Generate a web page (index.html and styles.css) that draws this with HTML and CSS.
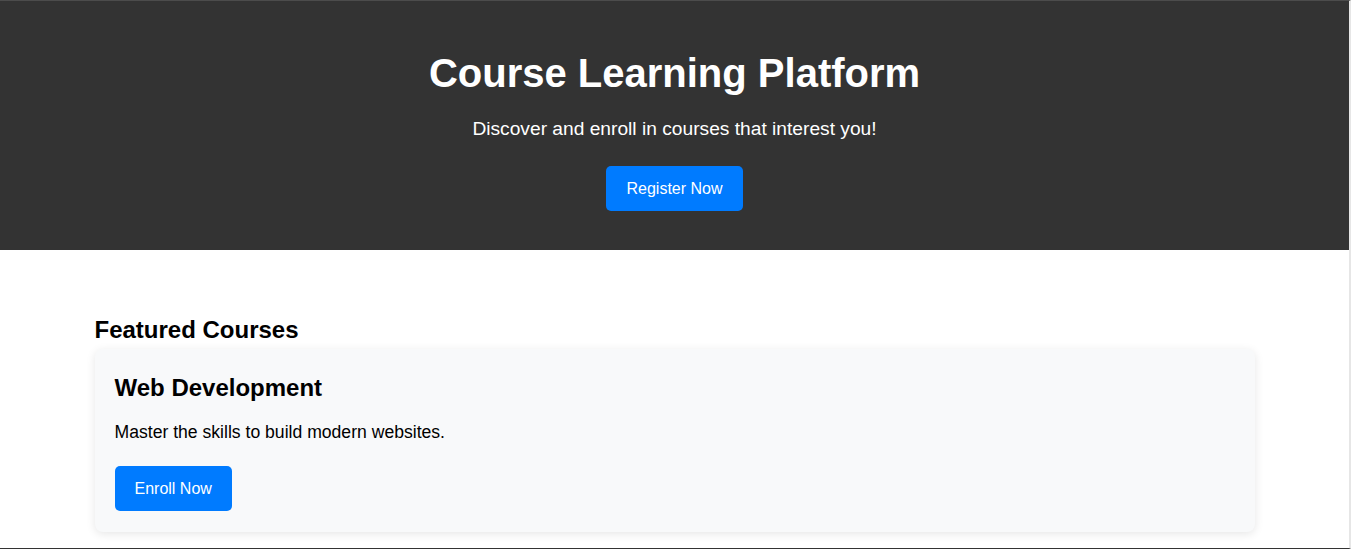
FILE: index.html
```html
<!DOCTYPE html>
<html lang="en">
<head>
<meta charset="utf-8">
<title>Course Learning Platform</title>
<link rel="stylesheet" href="styles.css">
</head>
<body>
<header class="hero">
  <h1 class="hero-title">Course Learning Platform</h1>
  <p class="hero-sub">Discover and enroll in courses that interest you!</p>
  <div class="hero-actions"><a class="btn" href="#">Register Now</a></div>
</header>
<main class="container">
  <section class="featured">
    <h2 class="section-title">Featured Courses</h2>
    <div class="card">
      <h3 class="card-title">Web Development</h3>
      <p class="card-text">Master the skills to build modern websites.</p>
      <div class="card-actions"><a class="btn" href="#">Enroll Now</a></div>
    </div>
  </section>
</main>
</body>
</html>
```

FILE: styles.css
```css
* { box-sizing: border-box; }
html, body { margin: 0; padding: 0; }
body {
  font-family: "Liberation Sans", Arial, sans-serif;
  line-height: 1.6;
  color: #000;
  background: #fff;
  margin-right: 2px;
}
body::after {
  content: "";
  position: fixed;
  left: 0; top: 0; right: 0; bottom: 0;
  border-top: 1px solid #4c4c4c;
  border-right: 2px solid #e6e6e6;
  border-bottom: 1px solid #333;
  pointer-events: none;
}
.hero {
  background: #333;
  color: #fff;
  text-align: center;
  padding: 41px 20px 39px;
}
.hero-title {
  margin: 0 0 9px;
  font-size: 40px;
  font-weight: bold;
}
.hero-sub {
  margin: 0 0 21px;
  font-size: 19.2px;
}
.hero-actions, .card-actions { display: flex; }
.hero-actions { justify-content: center; }
.btn {
  display: inline-block;
  background: #007bff;
  color: #fff;
  text-decoration: none;
  font-size: 16px;
  line-height: 25px;
  padding: 10px 20px;
  border-radius: 5px;
}
.container {
  max-width: 1200px;
  margin: 0 auto;
  padding: 40px 20px;
}
.section-title {
  margin: 21px 0 0;
  font-size: 24px;
  font-weight: bold;
}
.card {
  background: #f8f9fa;
  border-radius: 8px;
  box-shadow: 0 2px 10px rgba(0, 0, 0, 0.1);
  padding: 20px 20px 21px;
}
.card-title {
  margin: 0 0 10px;
  font-size: 24px;
  font-weight: bold;
}
.card-text {
  margin: 0 0 20px;
  font-size: 17.6px;
}
```
